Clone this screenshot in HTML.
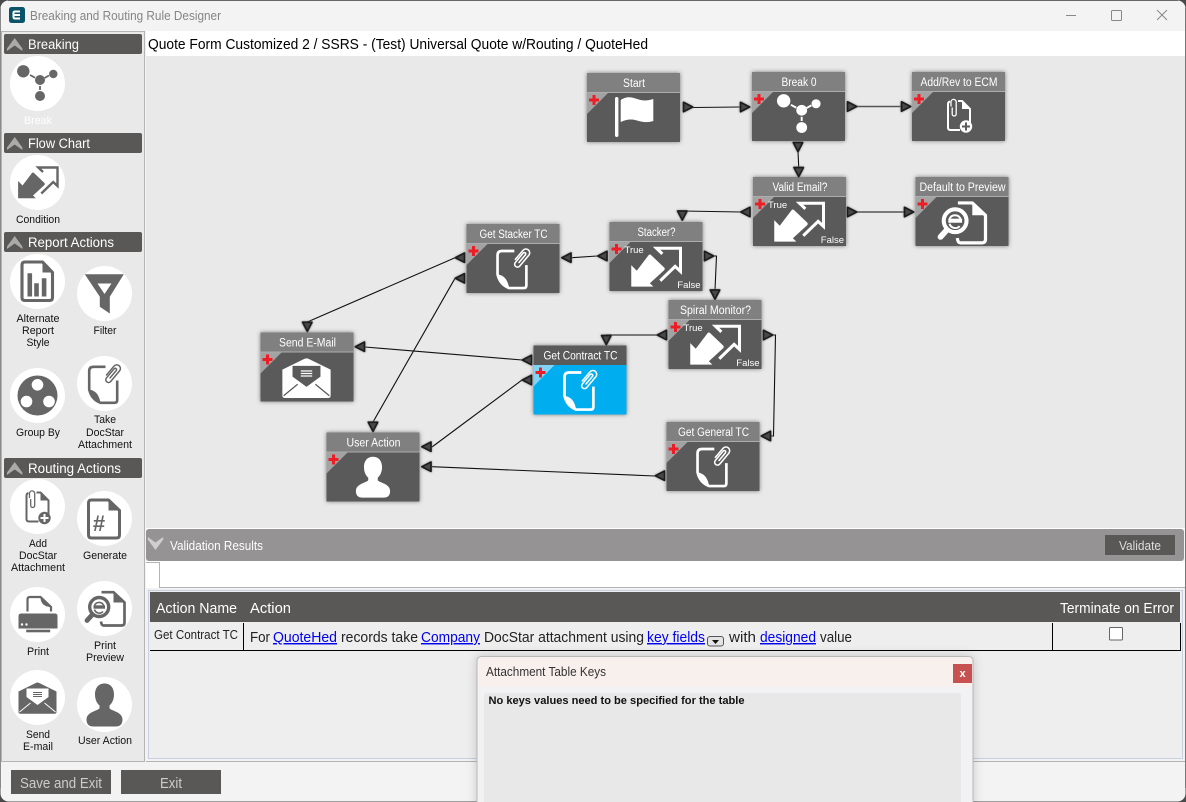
<!DOCTYPE html>
<html><head><meta charset="utf-8"><title>Breaking and Routing Rule Designer</title>
<style>
html,body{margin:0;padding:0;width:1186px;height:802px;overflow:hidden;background:#4a4a4a}
svg{display:block}
text{font-family:"Liberation Sans",sans-serif}
.sec{font-size:13.5px;fill:#fff}
.lab{font-size:11px;fill:#111;text-anchor:middle}
.nt{font-size:11.5px;fill:#fff;text-anchor:middle}
.tf{font-size:9.5px;fill:#fff}
.th{font-size:14.5px;fill:#fff}
.td{font-size:14.5px;fill:#222}
.lk{font-size:14.5px;fill:#0000ee;text-decoration:underline}
.pal{--bg:#fff;color:#666}
.nd{--bg:#5a5a5a;color:#fff}
.bl{--bg:#00aeef;color:#fff}
</style></head><body>
<svg width="1186" height="802" viewBox="0 0 1186 802" xmlns="http://www.w3.org/2000/svg">
<defs>
<g id="i-break" fill="currentColor" stroke="none">
<circle cx="-14.2" cy="-12.2" r="6.2"/><circle cx="15.8" cy="-9.5" r="4.2"/><circle cx="2.5" cy="-3.5" r="5"/><circle cx="2.5" cy="12.5" r="5"/>
<path d="M-7.5,-8.5L-2.5,-5.8M7,-5.5L11.5,-8M2.5,2.5V6.5" stroke="currentColor" stroke-width="1.8"/>
</g>
<g id="i-cond">
<path fill="currentColor" d="M-19.4,15.7V-1.5L-15,3L-5.5,-9.5Q-4.5,-10.5-3.5,-9.5L7,.5Q7.8,1.5 7,2.5L-4.5,13L-1.7,15.7Z"/>
<path fill="none" stroke="currentColor" stroke-width="2.4" d="M5.5,-10.5L.8,-15H20V3.5L15.7,-.5L3.8,11"/>
</g>
<g id="i-clip" fill="none" stroke-linecap="round" stroke-linejoin="round">
<path stroke="var(--bg)" stroke-width="4.5" d="M-3,6V-5a3.5,3.5 0 0 1 7,0V7a2.6,2.6 0 0 1-5.2,0V-3"/>
<path stroke="currentColor" stroke-width="1.3" d="M-2.6,5V-5a3.2,3.2 0 0 1 6.4,0V7a2.4,2.4 0 0 1-4.8,0V-3.4a1.2,1.2 0 0 1 2.4,0V5"/>
</g>
<g id="i-doc">
<path fill="none" stroke="currentColor" stroke-width="2.6" stroke-linejoin="round" d="M1,-16.7H-11Q-15.3,-16.7-15.3,-12.4V6Q-13,16-4,19.3H10Q12.7,19.3 12.7,16.5V-3"/>
<path fill="currentColor" d="M-15.3,6C-9,7-5.5,11-4,19.3Q-12,16-15.3,6Z"/>
<use href="#i-clip" transform="translate(8,-11) rotate(40) scale(1.15)"/>
</g>
<g id="i-adddoc">
<path fill="none" stroke="currentColor" stroke-width="2" stroke-linejoin="round" d="M-1,-14H3L11,-6V8M1,15H-8.5Q-11,15-11,12.5V-11Q-11,-13-9,-13.5"/>
<path fill="currentColor" d="M3,-14V-6H11Z"/>
<path fill="none" stroke="currentColor" stroke-width="1.3" stroke-linecap="round" d="M-8,-9V-13a2.6,2.6 0 0 1 5.2,0V-1a2,2 0 0 1-4,0V-7"/>
<circle cx="7" cy="11.5" r="6.2" fill="currentColor"/>
<path stroke="var(--bg)" stroke-width="2" d="M3,11.5H11M7,7.5V15.5"/>
</g>
<g id="i-report">
<path fill="none" stroke="currentColor" stroke-width="3.1" stroke-linejoin="round" d="M-12.5,-19.5H5L15,-9V16Q15,19 12,19H-12.5Q-15.5,19-15.5,16V-16.5Q-15.5,-19.5-12.5,-19.5Z"/>
<path fill="currentColor" d="M5,-19.5V-9H15ZM-10,-8.3h4.6V15H-10ZM-3.3,1.7h4.6V15H-3.3ZM4.3,-3.3h4.6V15H4.3Z"/>
</g>
<g id="i-filter">
<path fill="currentColor" d="M-19.7,-19.3H19.3L5.3,3.3V20L-4.7,13.3V3.3Z"/>
<path fill="#fff" d="M-7,-10H7L0,.5Z"/>
</g>
<g id="i-group">
<circle r="20" fill="currentColor"/>
<circle cx="0" cy="-10.7" r="5.8" fill="var(--bg)"/><circle cx="-11" cy="6" r="5.8" fill="var(--bg)"/><circle cx="11.5" cy="6" r="5.8" fill="var(--bg)"/>
</g>
<g id="i-gen">
<path fill="none" stroke="currentColor" stroke-width="3" stroke-linejoin="round" d="M-13,-18.5H4L15,-8V16.5Q15,19.5 12,19.5H-13Q-16,19.5-16,16.5V-15.5Q-16,-18.5-13,-18.5Z"/>
<path fill="currentColor" d="M4,-18.5V-8H15Z"/>
</g>
<g id="i-print">
<path fill="none" stroke="currentColor" stroke-width="2.2" d="M-10,-3V-15Q-10,-17.5-7.5,-17.5H3L13.5,-7.5V-3"/>
<path fill="currentColor" d="M3,-17.5Q3,-8 13.5,-7.5L3,-17.5Z"/>
<path fill="currentColor" d="M-19,1.5Q-19,-1-16,-1H17Q20,-1 20,1.5V14H-19Z"/>
<rect x="-11.3" y="15.2" width="24" height="2.6" fill="currentColor"/>
<circle cx="-15.5" cy="10" r="1.2" fill="var(--bg)"/><circle cx="-11" cy="10" r="1.2" fill="var(--bg)"/>
</g>
<g id="i-prev">
<path fill="none" stroke="currentColor" stroke-width="2.7" stroke-linejoin="round" d="M-3,-16.3H9L20,-6V14Q20,17 17,17H-1Q-3,17-3.5,13"/>
<path fill="currentColor" d="M9,-16.3V-6H20Z"/>
<circle cx="-5.3" cy="-1.5" r="9.5" fill="var(--bg)" stroke="currentColor" stroke-width="3.4"/>
<path stroke="currentColor" stroke-width="4.8" stroke-linecap="round" d="M-17.5,12L-12.5,6.5"/>
<path stroke="currentColor" stroke-width="3.4" d="M-11,-1.5H.5"/>
<path fill="none" stroke="currentColor" stroke-width="1.6" d="M-10,-3A5,5 0 0 1-.8,-3M-10,1A5,5 0 0 0-1.5,3"/>
</g>
<g id="i-mail">
<path fill="currentColor" d="M-1.5,-14.6Q0,-15.3 1.5,-14.6L19,-6V14.3Q19,16.3 17,16.3H-17Q-19,16.3-19,14.3V-6Z"/>
<path fill="var(--bg)" d="M-11,-9H11V-.5L0,7.5L-11,-.5Z"/>
<path stroke="currentColor" stroke-width="1" d="M-4.5,-5H4.5M-4.5,-3H4.5M-4.5,-1H4.5"/>
<path stroke="var(--bg)" stroke-width="1" fill="none" d="M-18,14.5L-7,5.5M18,14.5L7,5.5"/>
</g>
<g id="i-user">
<path fill="currentColor" d="M0,-21C-6.5,-21-9.5,-16-9.5,-10C-9.5,-5-7.5,-1-5,1V3.5C-5,6-18,7-18,15Q-18,22-11,22H11Q18,22 18,15C18,7 5,6 5,3.5V1C7.5,-1 9.5,-5 9.5,-10C9.5,-16 6.5,-21 0,-21Z"/>
</g>
<g id="i-flag" fill="#fff">
<rect x="28" y="24" width="3.4" height="40" rx="1.7"/>
<path d="M33.7,27C40,23 44,24 50,26S60,28 66.3,26V48C60,50 55,49 50,47.5S40,46 33.7,49Z"/>
</g>
<g id="node">
<rect width="93" height="69" fill="#5a5a5a" style="filter:drop-shadow(0 0 2px #777)"/>
<rect width="93" height="19" fill="#808080"/>
<rect y="19" width="93" height="1" fill="#adadad"/>
<path d="M0,20H21L0,41Z" fill="#a3a3a3"/>
<path d="M5.5,22H8.5V25.5H12V28.5H8.5V32H5.5V28.5H2V25.5H5.5Z" fill="#ee1c25"/>
</g>
<g id="nodeb">
<rect width="93" height="69" fill="#00aeef" style="filter:drop-shadow(0 0 2px #777)"/>
<rect width="93" height="19.5" fill="#5a5a5a"/>
<path d="M0,19.5H21L0,41Z" fill="#80d4f5"/>
<path d="M5.5,22H8.5V25.5H12V28.5H8.5V32H5.5V28.5H2V25.5H5.5Z" fill="#ee1c25"/>
</g>
<g id="port"><polygon points="-4.5,-4.7 4.7,0 -4.5,4.7" fill="#484848" stroke="#1c1c1c" stroke-width="1.7" stroke-linejoin="round" style="filter:drop-shadow(0 0 1px #888)"/></g>
<path id="chev" d="M-7.7,5.5L0,-5L7.7,5.5V8L0,2.5L-7.7,8Z"/>
</defs>

<!-- window -->
<rect x="0.5" y="0.5" width="1185" height="801" rx="8" fill="#f3f3f3"/>
<rect x="0" y="8" width="1" height="780" fill="#8a8a8a"/>
<rect x="1185" y="8" width="1" height="780" fill="#777"/>
<path d="M8,.5H1178" stroke="#666" stroke-width="1"/>
<!-- title -->
<rect x="9" y="7" width="16" height="16" rx="2.5" fill="#0b5468"/>
<path d="M20,15H13.5V13Q13.5,11.5 15,11.5H20M13.5,15V17Q13.5,18.5 15,18.5H20" fill="none" stroke="#fff" stroke-width="2"/>
<text x="30" y="20" font-size="12.5" fill="#858585" textLength="191" lengthAdjust="spacingAndGlyphs">Breaking and Routing Rule Designer</text>
<path d="M1066,15.5H1076" stroke="#888" stroke-width="1"/>
<rect x="1111.5" y="10.5" width="10" height="10" rx="1" fill="none" stroke="#888"/>
<path d="M1157,10L1167,20M1167,10L1157,20" stroke="#888" stroke-width="1"/>

<!-- header bar + canvas -->
<rect x="146" y="31" width="1039" height="25" fill="#fff"/>
<text x="148" y="49" font-size="14.5" fill="#000" textLength="500" lengthAdjust="spacingAndGlyphs">Quote Form Customized 2 / SSRS - (Test) Universal Quote w/Routing / QuoteHed</text>
<rect x="146" y="56" width="1039" height="472" fill="#e9e9e9"/>

<!-- left panel -->
<rect x="1.5" y="31.5" width="143" height="730" fill="#e9e9e9" stroke="#b4b4b4"/>
<g fill="#5a5856">
<rect x="4" y="34" width="138" height="20" rx="2"/><rect x="4" y="133" width="138" height="20" rx="2"/><rect x="4" y="232" width="138" height="20" rx="2"/><rect x="4" y="458" width="138" height="20" rx="2"/>
</g>
<g fill="#aaa">
<use href="#chev" x="14.7" y="43"/><use href="#chev" x="14.7" y="142"/><use href="#chev" x="14.7" y="241"/><use href="#chev" x="14.7" y="467"/>
</g>
<text class="sec" x="28" y="49" textLength="51" lengthAdjust="spacingAndGlyphs">Breaking</text>
<text class="sec" x="28" y="148" textLength="62" lengthAdjust="spacingAndGlyphs">Flow Chart</text>
<text class="sec" x="28" y="247" textLength="86" lengthAdjust="spacingAndGlyphs">Report Actions</text>
<text class="sec" x="28" y="473" textLength="93" lengthAdjust="spacingAndGlyphs">Routing Actions</text>

<g fill="#fff">
<circle cx="37.5" cy="83.5" r="27.5"/><circle cx="37.5" cy="182.5" r="27.5"/><circle cx="37.5" cy="281.5" r="27.5"/><circle cx="104.5" cy="293.5" r="27.5"/><circle cx="37.5" cy="395.5" r="27.5"/><circle cx="104.5" cy="383.5" r="27.5"/><circle cx="37.5" cy="506.5" r="27.5"/><circle cx="104.5" cy="518.5" r="27.5"/><circle cx="37.5" cy="614.5" r="27.5"/><circle cx="104.5" cy="608.5" r="27.5"/><circle cx="37.5" cy="697.5" r="27.5"/><circle cx="104.5" cy="704.5" r="27.5"/>
</g>
<g class="pal">
<use href="#i-break" transform="translate(37.5,83.5)"/>
<use href="#i-cond" transform="translate(37.5,182.5)"/>
<use href="#i-report" transform="translate(37.5,281.5)"/>
<use href="#i-filter" transform="translate(104.5,293.5)"/>
<use href="#i-group" transform="translate(37.5,395.5)"/>
<use href="#i-doc" transform="translate(104.5,383.5)"/>
<use href="#i-adddoc" transform="translate(37.5,506.5)"/>
<use href="#i-gen" transform="translate(104.5,518.5)"/>
<text x="99" y="531" font-size="22" font-weight="bold" fill="#666" text-anchor="middle">#</text>
<use href="#i-print" transform="translate(37.5,614.5)"/>
<use href="#i-prev" transform="translate(104.5,608.5)"/>
<use href="#i-mail" transform="translate(37.5,697.5)"/>
<use href="#i-user" transform="translate(104.5,704.5)"/>
</g>
<text class="lab" x="38" y="124" textLength="28" lengthAdjust="spacingAndGlyphs" style="fill:#fff">Break</text>
<text class="lab" x="38" y="223" textLength="44" lengthAdjust="spacingAndGlyphs">Condition</text>
<text class="lab" x="38" y="322" textLength="43" lengthAdjust="spacingAndGlyphs">Alternate</text>
<text class="lab" x="38" y="334" textLength="32" lengthAdjust="spacingAndGlyphs">Report</text>
<text class="lab" x="38" y="346" textLength="23" lengthAdjust="spacingAndGlyphs">Style</text>
<text class="lab" x="105" y="334" textLength="23" lengthAdjust="spacingAndGlyphs">Filter</text>
<text class="lab" x="38" y="436" textLength="44" lengthAdjust="spacingAndGlyphs">Group By</text>
<text class="lab" x="105" y="423" textLength="22" lengthAdjust="spacingAndGlyphs">Take</text>
<text class="lab" x="105" y="436" textLength="38" lengthAdjust="spacingAndGlyphs">DocStar</text>
<text class="lab" x="105" y="448" textLength="54" lengthAdjust="spacingAndGlyphs">Attachment</text>
<text class="lab" x="38" y="547" textLength="18" lengthAdjust="spacingAndGlyphs">Add</text>
<text class="lab" x="38" y="559" textLength="38" lengthAdjust="spacingAndGlyphs">DocStar</text>
<text class="lab" x="38" y="571" textLength="54" lengthAdjust="spacingAndGlyphs">Attachment</text>
<text class="lab" x="105" y="559" textLength="44" lengthAdjust="spacingAndGlyphs">Generate</text>
<text class="lab" x="38" y="655" textLength="22" lengthAdjust="spacingAndGlyphs">Print</text>
<text class="lab" x="105" y="649" textLength="22" lengthAdjust="spacingAndGlyphs">Print</text>
<text class="lab" x="105" y="661" textLength="38" lengthAdjust="spacingAndGlyphs">Preview</text>
<text class="lab" x="38" y="738" textLength="24" lengthAdjust="spacingAndGlyphs">Send</text>
<text class="lab" x="38" y="750" textLength="30" lengthAdjust="spacingAndGlyphs">E-mail</text>
<text class="lab" x="105" y="744" textLength="54" lengthAdjust="spacingAndGlyphs">User Action</text>

<!-- connectors -->
<g fill="none" stroke="#111" stroke-width="1.1">
<path d="M693,107.5L740,107"/>
<path d="M798,151L798.7,167"/>
<path d="M741,212L682,211"/>
<path d="M597,256L572,257.7"/>
<path d="M714,256L716.5,256L715,290"/>
<path d="M773,335L775.5,335L773.5,436L771,436"/>
<path d="M522,360L365,347"/>
<path d="M522,380L432,447"/>
<path d="M455,257.7L307.3,322"/>
<path d="M455,278.3L373,422"/>
<path d="M655,476L432,466.7"/>
</g>
<g fill="none" stroke="#555" stroke-width="1.5">
<path d="M857,106.5H901"/><path d="M857,212H904"/><path d="M657,335H606"/>
</g>

<!-- nodes -->
<g transform="translate(587,73)"><use href="#node"/><use href="#i-flag"/><text class="nt" x="47" y="14" textLength="22" lengthAdjust="spacingAndGlyphs">Start</text></g>
<g class="nd" transform="translate(752,72)"><use href="#node"/><use href="#i-break" transform="translate(47,42) scale(1.08)"/><text class="nt" x="47" y="14" textLength="35" lengthAdjust="spacingAndGlyphs">Break 0</text></g>
<g class="nd" transform="translate(912,72)"><use href="#node"/><use href="#i-adddoc" transform="translate(47,43)"/><text class="nt" x="47" y="14" textLength="77" lengthAdjust="spacingAndGlyphs">Add/Rev to ECM</text></g>
<g class="nd" transform="translate(753,177)"><use href="#node"/><use href="#i-cond" transform="translate(45.5,45) scale(1.25)"/><text class="nt" x="47" y="14" textLength="55" lengthAdjust="spacingAndGlyphs">Valid Email?</text><text class="tf" x="15" y="31">True</text><text class="tf" x="91" y="66" text-anchor="end">False</text></g>
<g class="nd" transform="translate(915.5,177)"><use href="#node"/><use href="#i-prev" transform="translate(46,45.5) scale(1.2)"/><text class="nt" x="47" y="14" textLength="86" lengthAdjust="spacingAndGlyphs">Default to Preview</text></g>
<g class="nd" transform="translate(609.5,222)"><use href="#node"/><use href="#i-cond" transform="translate(46,45) scale(1.25)"/><text class="nt" x="47" y="14" textLength="38" lengthAdjust="spacingAndGlyphs">Stacker?</text><text class="tf" x="15" y="31">True</text><text class="tf" x="91" y="66" text-anchor="end">False</text></g>
<g class="nd" transform="translate(466.5,224)"><use href="#node"/><use href="#i-doc" transform="translate(46.8,44.2) scale(1.03)"/><text class="nt" x="47" y="14" textLength="68" lengthAdjust="spacingAndGlyphs">Get Stacker TC</text></g>
<g class="nd" transform="translate(668.5,300)"><use href="#node"/><use href="#i-cond" transform="translate(46,45) scale(1.25)"/><text class="nt" x="47" y="14" textLength="71" lengthAdjust="spacingAndGlyphs">Spiral Monitor?</text><text class="tf" x="15" y="31">True</text><text class="tf" x="91" y="66" text-anchor="end">False</text></g>
<g class="bl" transform="translate(533.5,345.5)"><use href="#nodeb"/><use href="#i-doc" transform="translate(46.8,44.2) scale(1.03)"/><text class="nt" x="47" y="14" textLength="74" lengthAdjust="spacingAndGlyphs">Get Contract TC</text></g>
<g class="nd" transform="translate(260.5,332.5)"><use href="#node"/><use href="#i-mail" transform="translate(46,44.8) scale(1.27)"/><text class="nt" x="47" y="14" textLength="57" lengthAdjust="spacingAndGlyphs">Send E-Mail</text></g>
<g class="nd" transform="translate(326.5,432.5)"><use href="#node"/><use href="#i-user" transform="translate(46.5,44.2) scale(.95)"/><text class="nt" x="47" y="14" textLength="54" lengthAdjust="spacingAndGlyphs">User Action</text></g>
<g class="nd" transform="translate(666.5,422)"><use href="#node"/><use href="#i-doc" transform="translate(46.8,44.2) scale(1.03)"/><text class="nt" x="47" y="14" textLength="71" lengthAdjust="spacingAndGlyphs">Get General TC</text></g>

<!-- ports -->
<g>
<use href="#port" transform="translate(688,107)"/><use href="#port" transform="translate(745,107)"/><use href="#port" transform="translate(852,106.5)"/><use href="#port" transform="translate(906,106.5)"/><use href="#port" transform="translate(852,212)"/><use href="#port" transform="translate(909,212)"/><use href="#port" transform="translate(709,256)"/><use href="#port" transform="translate(768,335)"/>
<use href="#port" transform="translate(745.5,212) rotate(180)"/><use href="#port" transform="translate(602.5,256) rotate(180)"/><use href="#port" transform="translate(566.5,257.7) rotate(180)"/><use href="#port" transform="translate(460,257.7) rotate(180)"/><use href="#port" transform="translate(460,278.3) rotate(180)"/><use href="#port" transform="translate(662,335) rotate(180)"/><use href="#port" transform="translate(527,360) rotate(180)"/><use href="#port" transform="translate(527,380) rotate(180)"/><use href="#port" transform="translate(360,346.7) rotate(180)"/><use href="#port" transform="translate(426.5,446.7) rotate(180)"/><use href="#port" transform="translate(426.5,466.7) rotate(180)"/><use href="#port" transform="translate(766,436) rotate(180)"/><use href="#port" transform="translate(660,475.7) rotate(180)"/>
<use href="#port" transform="translate(798,147) rotate(90)"/><use href="#port" transform="translate(798.7,172) rotate(90)"/><use href="#port" transform="translate(682.3,215.5) rotate(90)"/><use href="#port" transform="translate(715,294.5) rotate(90)"/><use href="#port" transform="translate(606.3,340) rotate(90)"/><use href="#port" transform="translate(307.3,326.7) rotate(90)"/><use href="#port" transform="translate(373,426.7) rotate(90)"/>
</g>

<!-- validation -->
<rect x="146" y="528" width="1039" height="1" fill="#fff"/>
<rect x="146" y="529" width="1038" height="32" rx="3" fill="#959393"/>
<use href="#chev" transform="translate(155.5,545) rotate(180)" fill="#cfcfcf"/>
<text x="170" y="550" font-size="12.5" fill="#fff" textLength="93" lengthAdjust="spacingAndGlyphs">Validation Results</text>
<rect x="1105" y="535" width="70" height="20" fill="#5a5856"/>
<text x="1140" y="550" font-size="12.5" fill="#ddd" text-anchor="middle" textLength="42" lengthAdjust="spacingAndGlyphs">Validate</text>
<rect x="146" y="561" width="1039" height="27" fill="#fff"/>
<path d="M146,562.5H159.5V587.5H1185" fill="none" stroke="#b4b4b4"/>

<rect x="146" y="588" width="1039" height="174" fill="#f2f2f4"/>
<rect x="148.5" y="590.5" width="1034" height="168" fill="#eee" stroke="#c8d0e0"/>
<rect x="150" y="592" width="1030" height="30" fill="#5a5856"/>
<text class="th" x="156" y="613" textLength="81" lengthAdjust="spacingAndGlyphs">Action Name</text>
<text class="th" x="250" y="613" textLength="41" lengthAdjust="spacingAndGlyphs">Action</text>
<text class="th" x="1060" y="613" textLength="114" lengthAdjust="spacingAndGlyphs">Terminate on Error</text>
<path d="M150,650.5H1181M243.5,623V650M1052.5,623V650M1180.5,623V650" stroke="#000" stroke-width="1" fill="none"/>
<text x="154" y="639" font-size="12.5" fill="#222" textLength="84" lengthAdjust="spacingAndGlyphs">Get Contract TC</text>
<text class="td" x="250" y="642" textLength="20" lengthAdjust="spacingAndGlyphs">For</text>
<text class="lk" x="273" y="642" textLength="64" lengthAdjust="spacingAndGlyphs">QuoteHed</text>
<text class="td" x="341" y="642" textLength="77" lengthAdjust="spacingAndGlyphs">records take</text>
<text class="lk" x="421" y="642" textLength="59" lengthAdjust="spacingAndGlyphs">Company</text>
<text class="td" x="484" y="642" textLength="160" lengthAdjust="spacingAndGlyphs">DocStar attachment using</text>
<text class="lk" x="647" y="642" textLength="58" lengthAdjust="spacingAndGlyphs">key fields</text>
<rect x="707.5" y="636.5" width="16" height="9.5" rx="2.5" fill="#e4e4e4" stroke="#555"/>
<path d="M712,640H719L715.5,644Z" fill="#111"/>
<text class="td" x="729" y="642" textLength="27" lengthAdjust="spacingAndGlyphs">with</text>
<text class="lk" x="760" y="642" textLength="56" lengthAdjust="spacingAndGlyphs">designed</text>
<text class="td" x="820" y="642" textLength="32" lengthAdjust="spacingAndGlyphs">value</text>
<rect x="1109.5" y="627.5" width="13" height="12.5" rx="1" fill="#fff" stroke="#666"/>
<rect x="146" y="761" width="1039" height="1" fill="#b4b4b4"/>

<!-- bottom -->
<rect x="11" y="770" width="100" height="24" fill="#5a5856"/>
<rect x="121" y="770" width="100" height="24" fill="#5a5856"/>
<text x="61" y="788" font-size="14.5" fill="#ccc" text-anchor="middle" textLength="82" lengthAdjust="spacingAndGlyphs">Save and Exit</text>
<text x="171" y="788" font-size="14.5" fill="#ccc" text-anchor="middle" textLength="22" lengthAdjust="spacingAndGlyphs">Exit</text>

<!-- dialog -->
<path d="M477,810V661Q477,656.5 481.5,656.5H968.5Q973,656.5 973,661V810Z" fill="#f2f2f4" stroke="#b8b8b8" style="filter:drop-shadow(0 0 5px rgba(0,0,0,.18))"/>
<path d="M478,687V661Q478,657 482,657H968Q972.5,657 972.5,661V687Z" fill="#f8f0ec"/>
<text x="486" y="676" font-size="12.5" fill="#333" textLength="120" lengthAdjust="spacingAndGlyphs">Attachment Table Keys</text>
<rect x="953" y="664" width="19" height="19" fill="#c75050"/>
<text x="962.5" y="677" font-size="11" font-weight="bold" fill="#fff" text-anchor="middle">x</text>
<path d="M484,810V696Q484,693 487,693H958Q961,693 961,696V810Z" fill="#e8e8e8"/>
<text x="488.5" y="704" font-size="11" font-weight="bold" fill="#111" textLength="256" lengthAdjust="spacingAndGlyphs">No keys values need to be specified for the table</text>
</svg>
</body></html>
